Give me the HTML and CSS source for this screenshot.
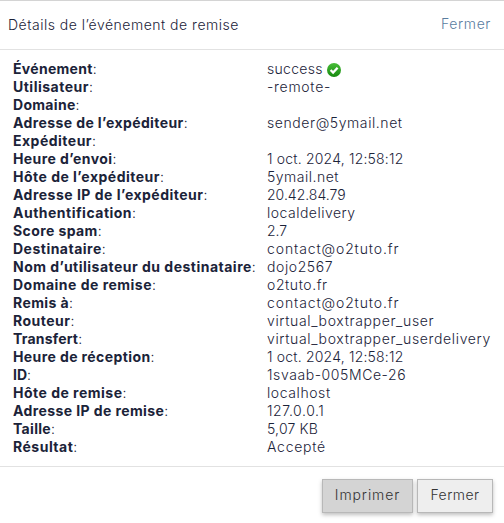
FILE: index.html
```html
<!DOCTYPE html>
<html lang="fr">
<head>
<meta charset="utf-8">
<title>Détails de l’événement de remise</title>
<link rel="stylesheet" href="styles.css">
</head>
<body>
<section class="dialog">
<header class="dialog-header">
<h1 class="title">Détails de l’événement de remise</h1>
<a class="close-link">Fermer</a>
</header>
<dl class="details">
<dt class="t3"><b>Événement</b>:</dt><dd class="status t3">success <svg class="check" viewBox="0 0 14 14"><defs><linearGradient id="g" x1="0" y1="0" x2="0" y2="1"><stop offset="0" stop-color="#48bd38"/><stop offset="1" stop-color="#16890f"/></linearGradient></defs><circle cx="7" cy="7" r="7" fill="url(#g)"/><path d="M3.6 7l2.5 2.5 4.5-4.8" fill="none" stroke="#fff" stroke-width="2.3"/></svg></dd>
<dt class="t5"><b>Utilisateur</b>:</dt><dd class="t7">-remote-</dd>
<dt class="t3"><b>Domaine</b>:</dt><dd></dd>
<dt class="t4"><b>Adresse de l’expéditeur</b>:</dt><dd class="t6">sender@5ymail.net</dd>
<dt class="t5"><b>Expéditeur</b>:</dt><dd></dd>
<dt class="t4"><b>Heure d’envoi</b>:</dt><dd class="t2">1 oct. 2024, 12:58:12</dd>
<dt class="t5"><b>Hôte de l’expéditeur</b>:</dt><dd class="t5">5ymail.net</dd>
<dt class="t5"><b>Adresse IP de l’expéditeur</b>:</dt><dd class="t0">20.42.84.79</dd>
<dt class="t5"><b>Authentification</b>:</dt><dd class="t5">localdelivery</dd>
<dt class="t4"><b>Score spam</b>:</dt><dd class="t0">2.7</dd>
<dt class="t5"><b>Destinataire</b>:</dt><dd class="t9">contact@o2tuto.fr</dd>
<dt class="t5"><b>Nom d’utilisateur du destinataire</b>:</dt><dd class="t6">dojo2567</dd>
<dt class="t5"><b>Domaine de remise</b>:</dt><dd class="t6">o2tuto.fr</dd>
<dt class="t4"><b>Remis à</b>:</dt><dd class="t9">contact@o2tuto.fr</dd>
<dt class="t5"><b>Routeur</b>:</dt><dd class="t65">virtual_boxtrapper_user</dd>
<dt class="t2"><b>Transfert</b>:</dt><dd class="t65">virtual_boxtrapper_userdelivery</dd>
<dt class="t4"><b>Heure de réception</b>:</dt><dd class="t2">1 oct. 2024, 12:58:12</dd>
<dt class="t0"><b>ID</b>:</dt><dd class="t6">1svaab-005MCe-26</dd>
<dt class="t5"><b>Hôte de remise</b>:</dt><dd class="t6">localhost</dd>
<dt class="t4"><b>Adresse IP de remise</b>:</dt><dd class="t6">127.0.0.1</dd>
<dt class="t3"><b>Taille</b>:</dt><dd class="t2">5,07 KB</dd>
<dt class="t5"><b>Résultat</b>:</dt><dd class="t7">Accepté</dd>
</dl>
<footer class="actions">
<button class="button print">Imprimer</button>
<button class="button">Fermer</button>
</footer>
</section>
</body>
</html>
```
FILE: styles.css
```css
* { box-sizing: border-box; }
body { margin: 0; background: #fff; color: #1b2339; font: 300 14px/18px Inter, sans-serif; overflow: hidden; }
.dialog { height: 523px; border-top: 1px solid #d4d4d4; }
.dialog-header { height: 49px; padding: 14px 13px 0 8px; display: flex; justify-content: space-between; border-bottom: 1px solid #e2e2e2; }
.title { margin: 1px 0 0; font: inherit; letter-spacing: .5px; }
.close-link { color: #5a7d9f; letter-spacing: .6px; }
.details { margin: 0; padding: 10px 0 0 13px; height: 416px; display: grid; grid-template-columns: 254px 1fr; grid-auto-rows: 18px; align-content: start; }
dt, dd { margin: 0; white-space: nowrap; }
b { font-weight: 650; }

/* letter tracking steps */
.t0 { letter-spacing: 0; }
.t2 { letter-spacing: .19px; }
.t3 { letter-spacing: .3px; }
.t4 { letter-spacing: .4px; }
.t5 { letter-spacing: .49px; }
.t6 { letter-spacing: .58px; }
.t65 { letter-spacing: .65px; }
.t7 { letter-spacing: .72px; }
.t9 { letter-spacing: .88px; }

.status { display: flex; gap: 4px; }
.check { width: 14px; height: 14px; margin-top: 3px; }
.actions { height: 57px; padding: 12px 11px 0 0; border-top: 1px solid #e2e2e2; display: flex; justify-content: flex-end; gap: 4px; }
.button { width: 76px; height: 34px; padding: 0 0 2px; border: 1px solid #b8b8b8; background: #eee; color: #333; font: inherit; letter-spacing: .45px; box-shadow: 0 2px 4px rgba(0, 0, 0, .25); }
.print { width: 91px; background: #d4d4d4; letter-spacing: .9px; }
```
